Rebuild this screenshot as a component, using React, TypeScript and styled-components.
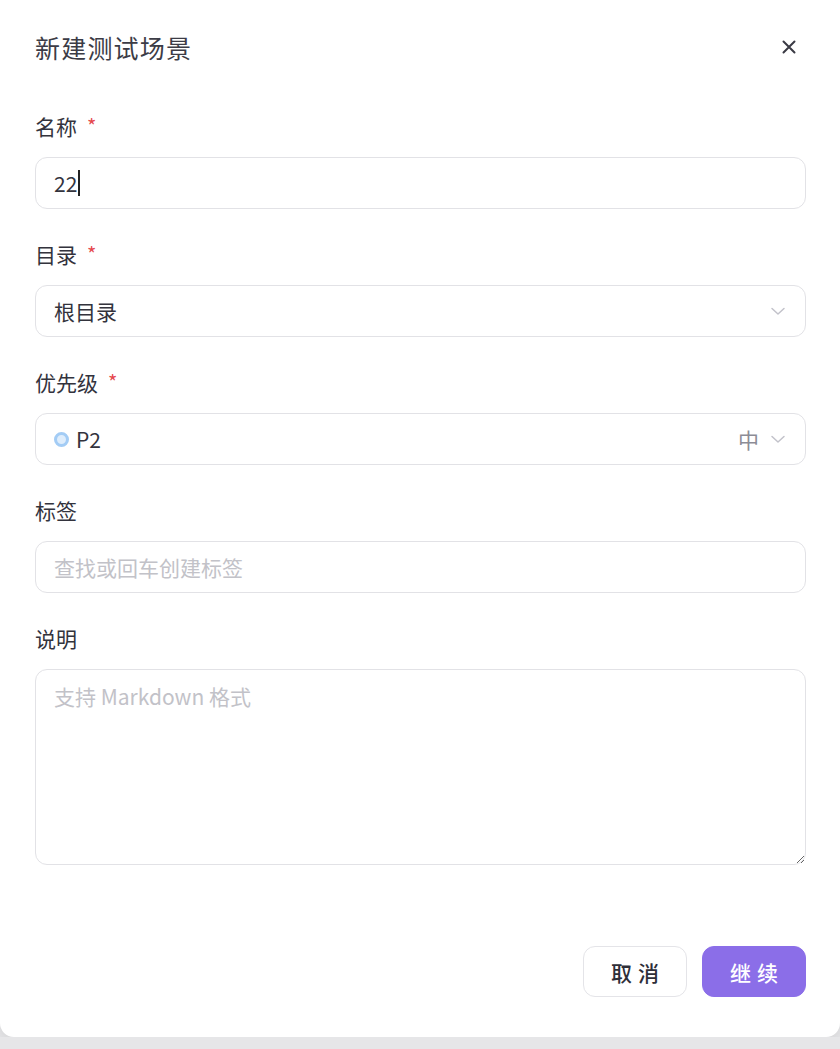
import React from "react";
import styled, { createGlobalStyle } from "styled-components";

const Global = createGlobalStyle`
  html, body { margin: 0; padding: 0; }
  body {
    background: #e6e6e8;
    font-family: "Noto Sans CJK SC", "Noto Sans", "Liberation Sans", sans-serif;
    color: #33333d;
  }
  * { box-sizing: border-box; }
`;

const Modal = styled.div`
  width: 840px;
  height: 1037px;
  background: #fff;
  border-radius: 0 0 14px 14px;
  box-shadow: 0 4px 14px rgba(0, 0, 0, 0.08);
  padding: 28px 34px 40px 35px;
  display: flex;
  flex-direction: column;
`;

const Header = styled.div`
  display: flex;
  align-items: center;
  justify-content: space-between;
  height: 38px;
  margin-bottom: 43px;
`;

const Title = styled.div`
  font-size: 25px;
  line-height: 38px;
  color: #3c3c46;
  letter-spacing: 1.2px;
`;

const CloseBtn = styled.button`
  border: none;
  background: transparent;
  padding: 0;
  width: 22px;
  height: 22px;
  display: flex;
  align-items: center;
  justify-content: center;
  margin-right: 6px;
  cursor: pointer;
`;

const Field = styled.div`
  display: flex;
  flex-direction: column;
  margin-bottom: 28px;
`;

const Label = styled.div`
  font-size: 21px;
  line-height: 35px;
  color: #33333d;
  margin-bottom: 13px;
  display: flex;
  align-items: center;
`;

const Star = styled.span`
  color: #e5484d;
  margin-left: 10px;
  font-size: 20px;
  position: relative;
  top: -1px;
`;

const Box = styled.div<{ $muted?: boolean }>`
  height: 52px;
  border: 1.5px solid #e2e2e6;
  border-radius: 12px;
  padding: 0 18px;
  display: flex;
  align-items: center;
  font-size: 21px;
  color: ${(p) => (p.$muted ? "#c2c2c8" : "#33333d")};
  background: #fff;
`;

const Caret = styled.span`
  display: inline-block;
  width: 2px;
  height: 26px;
  background: #222;
  margin-left: 1px;
`;

const Grow = styled.span`
  flex: 1;
`;

const Dot = styled.span`
  width: 15px;
  height: 15px;
  border-radius: 50%;
  border: 3px solid #a3ccf5;
  background: #deedfc;
  margin-left: 0;
  margin-right: 7px;
`;

const SideText = styled.span`
  color: #8c8c96;
  font-size: 21px;
  margin-right: 10px;
`;

const TextArea = styled.textarea`
  height: 196px;
  border: 1.5px solid #e2e2e6;
  border-radius: 12px;
  padding: 10px 18px;
  font-family: "Noto Sans CJK SC", "Noto Sans", "Liberation Sans", sans-serif;
  font-size: 21px;
  line-height: 32px;
  resize: vertical;
  outline: none;
  &::placeholder {
    color: #c2c2c8;
  }
`;

const Footer = styled.div`
  margin-top: auto;
  display: flex;
  justify-content: flex-end;
  gap: 15px;
`;

const Button = styled.button<{ $primary?: boolean }>`
  height: 51px;
  width: 104px;
  border-radius: 12px;
  font-family: "Noto Sans CJK SC", "Noto Sans", sans-serif;
  font-size: 21px;
  letter-spacing: 6px;
  padding: 0 0 0 6px;
  border: 1.5px solid ${(p) => (p.$primary ? "#8b6ee8" : "#e4e4e8")};
  background: ${(p) => (p.$primary ? "#8b6ee8" : "#fff")};
  color: ${(p) => (p.$primary ? "#fff" : "#2e2e38")};
  font-weight: 500;
  cursor: pointer;
`;

const Chevron = () => (
  <svg width="18" height="18" viewBox="0 0 18 18" fill="none">
    <path d="M3 6.5L9 12L15 6.5" stroke="#c2c2ca" strokeWidth="1.5" strokeLinecap="round" strokeLinejoin="round" />
  </svg>
);

export default function App() {
  return (
    <>
      <Global />
      <Modal>
        <Header>
          <Title>新建测试场景</Title>
          <CloseBtn aria-label="关闭">
            <svg width="16" height="16" viewBox="0 0 16 16" fill="none">
              <path d="M2.5 2.5L13.5 13.5M13.5 2.5L2.5 13.5" stroke="#3a3a44" strokeWidth="2" strokeLinecap="round" />
            </svg>
          </CloseBtn>
        </Header>

        <Field>
          <Label>
            名称<Star>*</Star>
          </Label>
          <Box>
            22
            <Caret />
          </Box>
        </Field>

        <Field>
          <Label>
            目录<Star>*</Star>
          </Label>
          <Box>
            <Grow>根目录</Grow>
            <Chevron />
          </Box>
        </Field>

        <Field>
          <Label>
            优先级<Star>*</Star>
          </Label>
          <Box>
            <Dot />
            <Grow>P2</Grow>
            <SideText>中</SideText>
            <Chevron />
          </Box>
        </Field>

        <Field>
          <Label>标签</Label>
          <Box $muted>查找或回车创建标签</Box>
        </Field>

        <Field>
          <Label>说明</Label>
          <TextArea placeholder="支持 Markdown 格式" />
        </Field>

        <Footer>
          <Button>取消</Button>
          <Button $primary>继续</Button>
        </Footer>
      </Modal>
    </>
  );
}
